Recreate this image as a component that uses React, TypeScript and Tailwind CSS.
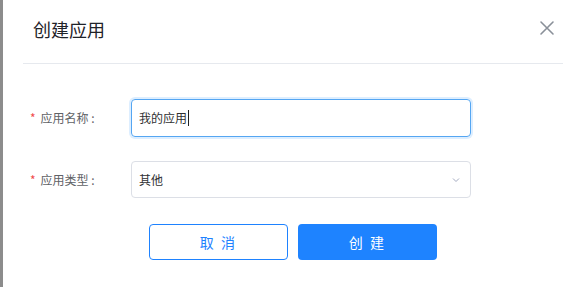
import React from "react";

export default function App() {
  const font = { fontFamily: '"Noto Sans CJK SC", "Noto Sans", sans-serif' };
  return (
    <div className="flex h-[287px] w-[580px] overflow-hidden bg-white" style={font}>
      <div className="w-[3px] shrink-0 bg-[#8c8c8c]" />
      <div className="flex flex-1 flex-col pl-[20px] pr-[17px]">
        <div className="flex h-[64px] items-start justify-between border-b border-[#e6e9ee] pl-[10px] pr-[8px] pt-[18px]">
          <span className="text-[18px] leading-[22px] text-[#1f2329]">创建应用</span>
          <svg width="16" height="16" viewBox="0 0 16 16" className="mt-[2px]">
            <path d="M2 2 L14 14 M14 2 L2 14" stroke="#8a9099" strokeWidth="1.6" strokeLinecap="round" />
          </svg>
        </div>
        <div className="flex flex-col pt-[35px]">
          <div className="flex items-center">
            <div className="flex w-[108px] items-center pl-[7px] text-[12px] text-[#606266]">
              <span className="mr-[5px] text-[#f04b4b]">*</span>
              <span>应用名称 :</span>
            </div>
            <div className="flex h-[38px] w-[340px] items-center rounded-[4px] border border-[#55a6f2] px-[7px] text-[12px] text-[#303133] shadow-[0_0_0_2px_rgba(64,158,255,0.18)]">
              <span>我的应用</span>
              <span className="ml-[1px] h-[16px] w-[1px] bg-[#222]" />
            </div>
          </div>
          <div className="mt-[24px] flex items-center">
            <div className="flex w-[108px] items-center pl-[7px] text-[12px] text-[#606266]">
              <span className="mr-[5px] text-[#f04b4b]">*</span>
              <span>应用类型 :</span>
            </div>
            <div className="flex h-[37px] w-[340px] items-center justify-between rounded-[4px] border border-[#dcdfe6] pl-[7px] pr-[10px] text-[12px] text-[#303133]">
              <span>其他</span>
              <svg width="8" height="6" viewBox="0 0 8 6">
                <path d="M1 1.5 L4 4.5 L7 1.5" fill="none" stroke="#a3aac0" strokeWidth="1" />
              </svg>
            </div>
          </div>
          <div className="mt-[26px] flex gap-[10px] pl-[126px]">
            <button className="flex h-[36px] w-[139px] items-center justify-center rounded-[4px] border border-[#1e82ff] bg-white text-[14px] tracking-[0.15em] text-[#1e82ff]">
              取 消
            </button>
            <button className="flex h-[36px] w-[139px] items-center justify-center rounded-[4px] bg-[#1e83ff] text-[14px] tracking-[0.15em] text-white">
              创 建
            </button>
          </div>
        </div>
      </div>
    </div>
  );
}
